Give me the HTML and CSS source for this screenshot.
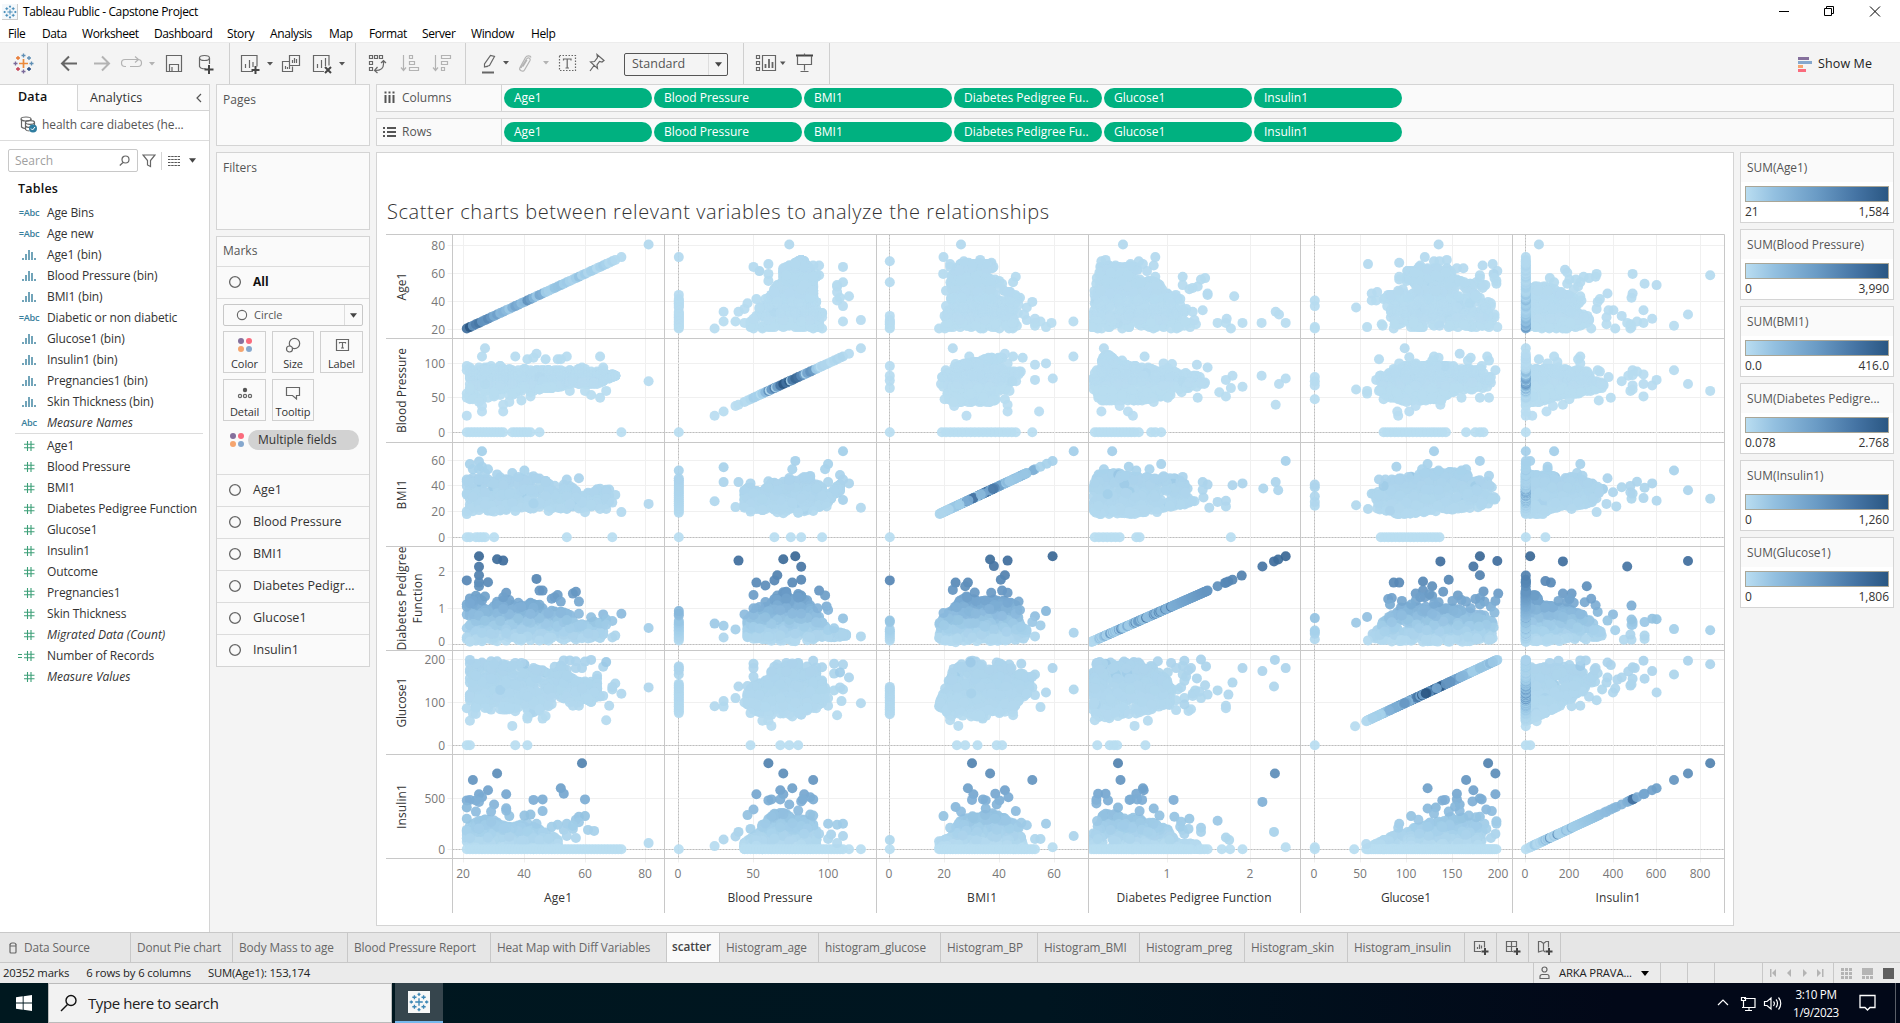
FILE: index.html
```html
<!DOCTYPE html>
<html lang="en">
<head>
<meta charset="utf-8">
<title>Tableau Public - Capstone Project</title>
<link rel="stylesheet" href="styles.css">
</head>
<body>
<svg class="defs" width="0" height="0" aria-hidden="true">
  <defs>
    <symbol id="i-hash" viewBox="0 0 12 12"><path d="M4.5 1v10M8 1v10M1 4.2h10.5M1 7.8h10.5"/></symbol>
    <symbol id="i-bin" viewBox="0 0 14 12"><path d="M1 9v2M4 5v6M7 1v10M10 3v8M13 9v2"/></symbol>
    <symbol id="i-circle" viewBox="0 0 14 14"><circle cx="7" cy="7" r="5.4"/></symbol>
    <symbol id="i-caret" viewBox="0 0 8 5"><path d="M0 0h8L4 5z"/></symbol>
    <symbol id="i-dots" viewBox="0 0 16 16"><circle cx="4" cy="4" r="3" fill="#85709c"/><circle cx="12" cy="4" r="3" fill="#fa6b7d"/><circle cx="4" cy="12" r="3" fill="#f5a56f"/><circle cx="12" cy="12" r="3" fill="#85a8ce"/></symbol>
    <symbol id="i-tableau" viewBox="0 0 24 24"><path d="M12 7.5v9M7.5 12h9M12 .8v4M10.2 2.8h3.6M12 19.2v4M10.2 21.2h3.6M.8 12h4M2.8 10.2v3.6M19.2 12h4M21.2 10.2v3.6M6.5 3.8v5M4 6.3h5M17.5 3.8v5M15 6.3h5M6.5 15.2v5M4 17.7h5M17.5 15.2v5M15 17.7h5"/></symbol>
  </defs>
</svg>

<header class="titlebar">
  <span class="app-icon"><svg width="14" height="14"><use href="#i-tableau"/></svg></span>
  <span class="app-title">Tableau Public - Capstone Project</span>
  <svg class="winctl" width="131" height="22"><path d="M10 10.5h10"/><path d="M55.500 7.500h7v7h-7zM57.500 7.500v-2h7v7h-2"/><path d="M101 5.500l10 10M111 5.500l-10 10"/></svg>
</header>
<nav class="menubar"><span>File</span><span>Data</span><span>Worksheet</span><span>Dashboard</span><span>Story</span><span>Analysis</span><span>Map</span><span>Format</span><span>Server</span><span>Window</span><span>Help</span></nav>

<div class="toolbar">
  <svg class="tb tb-logo" width="47" height="35"><g fill="none" stroke-width="1.3"><path stroke="#eb8a3c" stroke-width="1.7" d="M23.500 13v9M19 17.500h9"/><path stroke="#5f8fb5" d="M23.500 7.500v4M21.500 9.500h4M31.500 15.500v4M29.500 17.500h4M27 12h4M29 10v4"/><path stroke="#e8762d" d="M16 12h4M18 10v4"/><path stroke="#7a6a9a" d="M13.500 17.500h4M15.500 15.500v4M23.500 23.500v4M21.500 25.500h4"/><path stroke="#c43d52" d="M16 23h4M18 21v4"/><path stroke="#1f447e" d="M27 23h4M29 21v4"/></g></svg>
  <svg class="tb" width="182" height="35"><g class="ln" transform="translate(-1 0)">
    <path stroke-width="2" d="M15 17.500h15M22 10.500l-7 7 7 7"/>
    <path class="dim" stroke-width="2" d="M47 17.500h15M55 10.500l7 7-7 7"/>
    <path class="dim" d="M79 20.500h-1a3.500 3.500 0 0 1 0-7h13M88 10.500l3.500 3-3.500 3M91 13.500a3.500 3.500 0 0 1 0 7h-8"/>
    <path class="dimf" d="M102 16h6l-3 3.500z"/>
    <path d="M119.500 9.500h15v16h-15zM122.500 25v-6.500h9v6.500M125 21v4"/>
    <path d="M152.500 12v8.500c1 2 4 2.500 6 2M162.500 12v6"/><ellipse cx="157.500" cy="12" rx="5" ry="2.500"/><path class="bold" d="M162 19v9M157.500 23.500h9"/>
  </g></svg>
  <svg class="tb" width="126" height="35"><g class="ln" transform="translate(-1 0)">
    <path d="M24 25.500h-11.500v-16h15.500v11M16.500 18v4M20.500 14v8M24 16v5"/><path class="bold" d="M26.500 20v8M22.500 24h8"/>
    <path class="dkf" d="M38 16h6l-3 3.500z"/>
    <path d="M60.500 9.500h10v10h-10zM63.500 14v3M65.500 12v5M67.500 13v4M60 15.500h-6.500v10h10v-5M56.500 20v3M58.500 21v2M60.500 20v3"/>
    <path d="M95 25.500h-10.500v-16h15.500v10M88.500 18v4M92.500 14v8M96.500 12v8"/><path class="bold" d="M96 21l6 6M102 21l-6 6"/>
    <path class="dkf" d="M110 16h6l-3 3.500z"/>
  </g></svg>
  <svg class="tb" width="110" height="35"><g class="ln" transform="translate(-1 0)">
    <path d="M14.500 9.500h3v3h-3zM19.500 9.500h3v3h-3zM24.500 9.500h3v3h-3zM14.500 15.500h3v3h-3zM14.500 21.500h3v3h-3zM28.500 15v3c0 4-3 6.500-8 6.500M26 17l2.500-2.500 2.500 2.500M22.500 21l-3 3.500 3 2.500"/>
    <path class="dim" d="M48.500 9v15M46 21.500l2.500 3 2.500-3M54.500 9.500h3v3h-3zM54.500 15.500h5v3h-5zM54.500 21.500h9v3h-9z"/>
    <path class="dim" d="M80.500 9v15M78 21.500l2.500 3 2.500-3M86.500 9.500h9v3h-9zM86.500 15.500h6v3h-6zM86.500 21.500h3v3h-3z"/>
  </g></svg>
  <svg class="tb tb-last" width="158" height="35"><g class="ln">
    <path d="M18.500 21v-3l6-8.500 4 1-5 9zM18.500 21l3.500-.5"/><path stroke-width="2" d="M16 26.500h12"/>
    <path class="dkf" d="M37 15h6l-3 3.500z"/>
    <path class="dim" d="M55 22l5.500-9c1.500-2.500 4.500-.5 3.500 1.500l-5.500 9.500c-1.500 2.500-6 .5-4.500-2.500l5.500-10c1.500-2.500 5-2 5.500 0M57 20.500l4-6.500"/>
    <path class="dimf" d="M77 15h6l-3 3.500z"/>
    <path stroke-dasharray="1.500 1.500" d="M93.500 9.500h16v15h-16z"/><path d="M97.500 14.500v-1.500h7.500v1.500M101.200 13v9M99.500 22h3.500"/>
    <path d="M131 8.500l7 6-2 1.500-2.500-.5-2.500 3.500.5 3.500-7-6.500 4-.5 3-4zM128 19.500l-4 5.500"/>
  </g></svg>
  <div class="fit-select"><span>Standard</span><i></i><svg width="7" height="5"><use href="#i-caret"/></svg></div>
  <svg class="tb tb-show" width="86" height="35"><g class="ln" transform="translate(-1 0)">
    <path d="M13.500 9.500h3v3h-3zM13.500 15.500h3v3h-3zM13.500 21.500h3v3h-3zM19.500 9.500h13v15h-13z"/><path class="bars" d="M22.500 18v4M26 13v9M29.500 16v6"/>
    <path class="dkf" d="M37 15.500h5.500l-2.700 3.500z"/>
    <path class="bold" d="M53 9.500h17"/><path d="M54.500 10v8.500h14v-8.500M61.500 7.500v2M61.500 18.500v6M57.500 25.500h8"/>
  </g></svg>
  <div class="showme"><svg width="14" height="16"><path fill="#85709c" d="M0 1h11v3H0z"/><path fill="#85a8ce" d="M0 5h14v3H0z"/><path fill="#f5a56f" d="M0 9h5v3H0z"/><path fill="#fa6b7d" d="M0 13h8v3H0z"/></svg><span>Show Me</span></div>
</div>

<main class="work">
  <aside class="data-pane">
    <div class="pane-tabs"><b>Data</b><span>Analytics<svg width="6" height="10"><path d="M5 1L1 5l4 4"/></svg></span></div>
    <div class="source"><svg width="18" height="17"><g class="ln"><ellipse cx="6" cy="3" rx="5" ry="2"/><path d="M1.500 3v8c1 1 2 1.500 4 1.500M11 3v1"/><ellipse cx="10" cy="6.500" rx="4.500" ry="1.800"/><path d="M5.500 6.500v7c1 1.500 3 1.500 4 1.500M14.500 6.500v3M5.500 10c1.500 1.500 4 1.500 5 1"/></g><circle cx="13" cy="12.500" r="4" fill="#2f7da0"/><path d="M11 12.500l1.500 1.500 2.500-3" fill="none" stroke="#fff"/></svg><span>health care diabetes (he...</span></div>
    <div class="search-row">
      <div class="search"><span>Search</span><svg width="11" height="11"><g class="ln"><circle cx="6.500" cy="4.500" r="3.500"/><path d="M4 7.500L.8 10.500"/></g></svg></div>
      <svg width="14" height="14"><path class="lnp" d="M1 1h12l-4.500 5.500v6l-3-1.500V6.500z"/></svg>
      <i></i>
      <svg class="view-ic" width="12" height="12"><path d="M0 1.500h12M0 4.500h12M0 7.500h12M0 10.500h12" stroke="#555" stroke-dasharray="2.500 .7" fill="none"/></svg>
      <svg class="view-caret" width="7" height="5"><use href="#i-caret"/></svg>
    </div>
    <h2>Tables</h2>
    <ul class="fields dims">
      <li><em class="abc">=Abc</em>Age Bins</li>
      <li><em class="abc">=Abc</em>Age new</li>
      <li><em><svg width="14" height="12"><use href="#i-bin"/></svg></em>Age1 (bin)</li>
      <li><em><svg width="14" height="12"><use href="#i-bin"/></svg></em>Blood Pressure (bin)</li>
      <li><em><svg width="14" height="12"><use href="#i-bin"/></svg></em>BMI1 (bin)</li>
      <li><em class="abc">=Abc</em>Diabetic or non diabetic</li>
      <li><em><svg width="14" height="12"><use href="#i-bin"/></svg></em>Glucose1 (bin)</li>
      <li><em><svg width="14" height="12"><use href="#i-bin"/></svg></em>Insulin1 (bin)</li>
      <li><em><svg width="14" height="12"><use href="#i-bin"/></svg></em>Pregnancies1 (bin)</li>
      <li><em><svg width="14" height="12"><use href="#i-bin"/></svg></em>Skin Thickness (bin)</li>
      <li class="it"><em class="abc">Abc</em>Measure Names</li>
    </ul>
    <ul class="fields meas">
      <li><em><svg width="12" height="12"><use href="#i-hash"/></svg></em>Age1</li>
      <li><em><svg width="12" height="12"><use href="#i-hash"/></svg></em>Blood Pressure</li>
      <li><em><svg width="12" height="12"><use href="#i-hash"/></svg></em>BMI1</li>
      <li><em><svg width="12" height="12"><use href="#i-hash"/></svg></em>Diabetes Pedigree Function</li>
      <li><em><svg width="12" height="12"><use href="#i-hash"/></svg></em>Glucose1</li>
      <li><em><svg width="12" height="12"><use href="#i-hash"/></svg></em>Insulin1</li>
      <li><em><svg width="12" height="12"><use href="#i-hash"/></svg></em>Outcome</li>
      <li><em><svg width="12" height="12"><use href="#i-hash"/></svg></em>Pregnancies1</li>
      <li><em><svg width="12" height="12"><use href="#i-hash"/></svg></em>Skin Thickness</li>
      <li class="it"><em><svg width="12" height="12"><use href="#i-hash"/></svg></em>Migrated Data (Count)</li>
      <li><em><svg class="eq" width="17" height="12"><path d="M0 4.500h4M0 7.500h4"/><use href="#i-hash" x="5" width="12" height="12"/></svg></em>Number of Records</li>
      <li class="it"><em><svg width="12" height="12"><use href="#i-hash"/></svg></em>Measure Values</li>
    </ul>
  </aside>

  <section class="cards">
    <div class="card pages">Pages</div>
    <div class="card filters">Filters</div>
    <div class="card marks">
      <div class="mk-head">Marks</div>
      <div class="mk-row mk-all"><svg width="14" height="14"><use href="#i-circle"/></svg><b>All</b></div>
      <div class="mk-body">
        <div class="mk-select"><svg width="12" height="12"><use href="#i-circle"/></svg><span>Circle</span><i><svg width="7" height="5"><use href="#i-caret"/></svg></i></div>
        <div class="mk-btns">
          <div><svg width="16" height="16"><use href="#i-dots"/></svg>Color</div>
          <div><svg width="16" height="16"><g class="ln"><circle cx="9.500" cy="6.500" r="5.200"/><circle cx="4.500" cy="12" r="3" fill="#fafafa"/></g></svg>Size</div>
          <div><svg width="16" height="16"><g class="ln"><path d="M2.500 2.500h12v11h-12z"/><path d="M5.500 6.500v-1h6v1M8.500 5.500v5.500M7 11h3"/></g></svg>Label</div>
          <div><svg width="16" height="16"><circle cx="8" cy="5" r="2.200" fill="#555"/><g class="ln"><circle cx="3" cy="11" r="1.600"/><circle cx="8" cy="11" r="1.600"/><circle cx="13" cy="11" r="1.600"/></g></svg>Detail</div>
          <div><svg width="16" height="16"><path class="lnp" d="M1.500 2.500h13v8h-3v3.500l-4-3.500h-6z"/></svg>Tooltip</div>
        </div>
        <div class="mk-multi"><svg width="16" height="16"><use href="#i-dots"/></svg><span>Multiple fields</span></div>
      </div>
      <div class="mk-row"><svg width="14" height="14"><use href="#i-circle"/></svg><span>Age1</span></div>
      <div class="mk-row"><svg width="14" height="14"><use href="#i-circle"/></svg><span>Blood Pressure</span></div>
      <div class="mk-row"><svg width="14" height="14"><use href="#i-circle"/></svg><span>BMI1</span></div>
      <div class="mk-row"><svg width="14" height="14"><use href="#i-circle"/></svg><span>Diabetes Pedigr...</span></div>
      <div class="mk-row"><svg width="14" height="14"><use href="#i-circle"/></svg><span>Glucose1</span></div>
      <div class="mk-row"><svg width="14" height="14"><use href="#i-circle"/></svg><span>Insulin1</span></div>
    </div>
  </section>

  <section class="canvas">
    <div class="shelf"><div class="shelf-name"><svg width="14" height="14"><path d="M2.500 4v8M6.500 4v8M10.500 4v8M1.500 1.500h2M5.500 1.500h2M9.500 1.500h2" stroke="#555" stroke-width="2"/></svg>Columns</div><div class="pills"><span>Age1</span><span>Blood Pressure</span><span>BMI1</span><span>Diabetes Pedigree Fu..</span><span>Glucose1</span><span>Insulin1</span></div></div>
    <div class="shelf"><div class="shelf-name"><svg width="14" height="14"><path d="M0 3h2M4 3h9M0 7h2M4 7h9M0 11h2M4 11h9" stroke="#555" stroke-width="2"/></svg>Rows</div><div class="pills"><span>Age1</span><span>Blood Pressure</span><span>BMI1</span><span>Diabetes Pedigree Fu..</span><span>Glucose1</span><span>Insulin1</span></div></div>
    <div class="stage">
      <div class="view"><svg id="chart" width="1356" height="772"></svg></div>
      <div class="legends">
        <div class="legend"><h3>SUM(Age1)</h3><div class="ramp"></div><p><span>21</span><span>1,584</span></p></div>
        <div class="legend"><h3>SUM(Blood Pressure)</h3><div class="ramp"></div><p><span>0</span><span>3,990</span></p></div>
        <div class="legend"><h3>SUM(BMI1)</h3><div class="ramp"></div><p><span>0.0</span><span>416.0</span></p></div>
        <div class="legend"><h3>SUM(Diabetes Pedigre...</h3><div class="ramp"></div><p><span>0.078</span><span>2.768</span></p></div>
        <div class="legend"><h3>SUM(Insulin1)</h3><div class="ramp"></div><p><span>0</span><span>1,260</span></p></div>
        <div class="legend"><h3>SUM(Glucose1)</h3><div class="ramp"></div><p><span>0</span><span>1,806</span></p></div>
      </div>
    </div>
  </section>
</main>

<nav class="sheets">
  <span class="src"><svg width="9" height="12"><g class="ln"><path d="M1 2.500v7.500a1 1 0 0 0 1 1h4a1 1 0 0 0 1-1v-7.500M1 4h6"/><path d="M1 3a2 2 0 0 1 2-2h2a2 2 0 0 1 2 2"/></g></svg>Data Source</span>
  <span>Donut Pie chart</span><span>Body Mass to age</span><span>Blood Pressure Report</span><span>Heat Map with Diff Variables</span><span class="on">scatter</span><span>Histogram_age</span><span>histogram_glucose</span><span>Histogram_BP</span><span>Histogram_BMI</span><span>Histogram_preg</span><span>Histogram_skin</span><span>Histogram_insulin</span>
  <span class="new"><svg width="16" height="16"><g class="ln"><path d="M8 11.500H1.500v-10h10v6M4.500 7v2M6.500 4.500v4.500M8.500 5.500v3"/><path class="bold" d="M12 8v7M8.500 11.500h7"/></g></svg></span>
  <span class="new"><svg width="16" height="16"><g class="ln"><path d="M8 11.500H1.500v-10h10v6M1.500 6.500h10M6.500 1.500v10"/><path class="bold" d="M12 8v7M8.500 11.500h7"/></g></svg></span>
  <span class="new"><svg width="16" height="16"><g class="ln"><path d="M8 12l-1.500-1.500L1.500 12V1.500l2.500 0 2.500 2 2.500-2h2.500v6M6.500 3.500v7"/><path class="bold" d="M12 8v7M8.500 11.500h7"/></g></svg></span>
  <span class="rest"></span>
</nav>
<div class="status">
  <span class="st-text"><span>20352 marks</span><span>6 rows by 6 columns</span><span>SUM(Age1): 153,174</span></span>
  <span class="user"><svg width="11" height="14"><g class="ln"><circle cx="5.500" cy="3.500" r="2.500"/><path d="M1 12.500v-2a2 2 0 0 1 2-2h5a2 2 0 0 1 2 2v2z"/></g></svg><span>ARKA PRAVA...</span><svg class="ucaret" width="8" height="5"><use href="#i-caret"/></svg></span>
  <span></span><span></span><span></span>
  <span><svg width="66" height="20"><g fill="#b4b4b4" transform="translate(-1 0)"><path d="M8 6h1.500v8H8zM14 6v8l-4-4zM29 6v8l-4-4zM41 6v8l4-4zM55 6v8l4-4zM60 6h1.500v8H60z"/></g></svg></span>
  <span><svg width="66" height="20"><g transform="translate(-1 0)"><path stroke="#b4b4b4" stroke-width="3" stroke-dasharray="3 1" d="M8 6.500h11M8 10.500h11M8 14.500h11"/><path fill="#b4b4b4" d="M29 5h11v7H29zM29 13h3v3h-3zM33 13h3v3h-3zM37 13h3v3h-3z"/><path fill="#5f5f5f" d="M50 5h11v11H50z"/></g></svg></span>
</div>
<footer class="taskbar">
  <div class="start"><svg width="17" height="16"><path fill="#fff" d="M0 2.300L6.700 1.300v6.200H0zM7.600 1.200L16 0v7.500H7.600zM0 8.500h6.700v6.200L0 13.700zM7.600 8.500H16V16l-8.400-1.200z"/></svg></div>
  <div class="tsearch"><svg width="18" height="18"><g fill="none" stroke="#111" stroke-width="1.400"><circle cx="11" cy="6.500" r="5"/><path d="M7.500 10.500L1 17"/></g></svg><span>Type here to search</span></div>
  <div class="tapp"><i><svg width="20" height="20"><use href="#i-tableau"/></svg></i></div>
  <div class="tray">
    <svg width="70" height="22"><g fill="none" stroke="#fff" stroke-width="1.200"><path d="M2 13l5-5 5 5"/><path d="M28 6.500h11v9H26M25.500 5.500h4v3h-4zM27.500 9v7M33 15.500v3M29 18.500h7"/><path d="M48.500 9.500h2.500l4-3.500v11l-4-3.500h-2.500zM57.500 9.500c1 1 1 3 0 4.500M60 7.500c2 2 2 5.500 0 8M62.500 5.500c3 3.500 3 8.500 0 12"/></g></svg>
    <div class="clock"><span>3:10 PM</span><span>1/9/2023</span></div>
    <svg class="note" width="18" height="18"><path fill="none" stroke="#fff" stroke-width="1.300" d="M1 1.500h15v12h-5l-2.500 2.500-2.500-2.500H1z"/></svg>
    <i class="peek"></i>
  </div>
</footer>
<script src="chart.js"></script>
</body>
</html>
```
FILE: styles.css
```css
* { box-sizing: border-box; }
body { margin: 0; width: 1900px; height: 1023px; overflow: hidden; display: flex; flex-direction: column; background: #f4f4f4; font-family: "Open Sans", "Noto Sans", sans-serif; font-size: 12px; color: #333; line-height: 16px; }
svg { display: block; flex: none; }
.defs { position: absolute; }
ul, h2, h3, p { margin: 0; padding: 0; list-style: none; }
em { font-style: normal; }
.ln, .lnp { fill: none; stroke: #666; stroke-width: 1.2; }
.ln .bold { stroke: #444; stroke-width: 2; }
.ln .bars { stroke-width: 1.8; }
.ln .dim { stroke: #b3b3b3; }
.ln .dimf { fill: #b3b3b3; stroke: none; }
.ln .dkf { fill: #555; stroke: none; }
use[href="#i-circle"] { fill: none; stroke: #666; stroke-width: 1.3; }
use[href="#i-caret"] { fill: #444; }

.titlebar { height: 23px; background: #fff; display: flex; align-items: center; color: #000; font-size: 12px; letter-spacing: -.35px; }
.app-icon { width: 16px; height: 16px; margin: 0 5px 0 2px; padding: 1px; border: 1px solid #ccc; border-width: 0 1px 1px 0; background: #f4f8fb; }
.app-icon use { fill: none; stroke: #3d87b5; stroke-width: 1.6; }
.winctl { margin-left: auto; fill: none; stroke: #000; }
.menubar { height: 20px; background: #fff; color: #000; display: grid; grid-template-columns: 34px 40px 72px 73px 43px 59px 40px 53px 49px 60px 60px; padding-left: 8px; line-height: 21px; letter-spacing: -.4px; border-bottom: 1px solid #ececec; }

.toolbar { height: 41px; display: flex; align-items: center; padding-top: 1px; }
.tb { height: 42px; padding-top: 3px; border-right: 1px solid #cfcfcf; overflow: visible; }
.tb-last { border: 0; }
.tb-logo { width: 48px; }
.fit-select { width: 104px; height: 23px; border: 1px solid #555; border-radius: 2px; display: flex; align-items: center; padding: 0 5px 0 7px; color: #555; font-size: 12.500px; }
.fit-select span { flex: 1; }
.fit-select i { width: 1px; height: 21px; background: #ddd; margin-right: 6px; }
.tb-show { margin-left: 15px; width: 87px; border-left: 1px solid #cfcfcf; }
.showme { margin-left: auto; margin-right: 28px; display: flex; gap: 6px; align-items: center; font-size: 12.500px; letter-spacing: .1px; color: #222; }

.work { display: flex; height: 848px; }
.data-pane { width: 210px; background: #fff; border-right: 1px solid #d4d4d4; border-top: 1px solid #d4d4d4; }
.pane-tabs { display: flex; height: 26px; line-height: 24px; font-size: 12.500px; }
.pane-tabs b { width: 77px; padding-left: 18px; color: #111; font-weight: 600; letter-spacing: .2px; }
.pane-tabs span { flex: 1; display: flex; justify-content: space-between; align-items: center; padding: 0 7px 0 12px; background: #fafafa; border: 1px solid #d4d4d4; border-width: 0 0 1px 1px; letter-spacing: .1px; }
.pane-tabs svg { fill: none; stroke: #555; stroke-width: 1.2; }
.source { height: 30px; border-bottom: 1px solid #dcdcdc; display: flex; align-items: center; gap: 4px; padding: 0 0 2px 20px; color: #555; letter-spacing: -.08px; }
.search-row { display: flex; align-items: center; height: 23px; margin: 8px 0 0 8px; }
.search { width: 130px; height: 23px; border: 1px solid #c8c8c8; border-radius: 2px; display: flex; justify-content: space-between; align-items: center; padding: 0 7px 0 6px; color: #a0a0a0; margin-right: 4px; }
.search-row i { width: 1px; height: 18px; background: #d4d4d4; margin: 0 6px 0 5px; }
.view-caret { margin-left: 9px; }
h2 { font-size: 12.500px; font-weight: 600; color: #111; padding: 9px 0 5px 18px; letter-spacing: .2px; }
.fields { font-size: 12px; letter-spacing: -.12px; }
.fields li { height: 21px; line-height: 21px; display: flex; align-items: center; white-space: nowrap; }
.fields em { width: 29px; margin-left: 18px; height: 21px; display: flex; align-items: center; justify-content: center; padding-right: 7px; }
.fields .abc { color: #377e9c; font-weight: 600; font-size: 9.200px; letter-spacing: -.3px; font-style: normal; }
.fields .it { font-style: italic; letter-spacing: .02px; }
use[href="#i-bin"] { fill: none; stroke: #377e9c; stroke-width: 1.4; }
use[href="#i-hash"], .eq path { fill: none; stroke: #3c9f77; stroke-width: 1.1; }
.fields .eq { margin-left: -5px; }
.meas { border-top: 1px solid #dcdcdc; margin: 0 6px 0 15px; }
.meas li { margin-left: -15px; }
.meas li:first-child { margin-top: 1px; }

.cards { width: 166px; padding-left: 6px; display: flex; flex-direction: column; gap: 6px; }
.card { width: 154px; border: 1px solid #d4d4d4; background: #fafafa; color: #555; padding: 7px 6px; }
.pages { height: 62px; }
.filters { height: 78px; }
.marks { padding: 0; height: 431px; }
.mk-head { height: 29px; padding: 6px 6px; }
.mk-row { height: 32px; border-top: 1px solid #dcdcdc; display: flex; align-items: center; padding: 0 0 1px 11px; gap: 11px; color: #333; font-size: 12.500px; }
.mk-row b { color: #111; font-weight: 700; font-size: 12px; }
.mk-all { padding-bottom: 2px; }
.mk-body { height: 176px; border-top: 1px solid #dcdcdc; padding: 5px 6px; }
.mk-select { height: 22px; border: 1px solid #c8c8c8; border-radius: 2px; display: flex; align-items: center; padding-left: 12px; gap: 6px; font-size: 11px; }
.mk-select i { margin-left: auto; width: 18px; height: 20px; border-left: 1px solid #ddd; display: flex; align-items: center; justify-content: center; }
.mk-btns { display: grid; grid-template-columns: 43px 42px 43px; grid-auto-rows: 42px; gap: 6px; margin-top: 5px; }
.mk-btns div { border: 1px solid #d0d0d0; display: flex; flex-direction: column; align-items: center; justify-content: space-between; padding: 5px 0 0; font-size: 11px; color: #333; letter-spacing: -.1px; }
.mk-multi { display: flex; align-items: center; gap: 3px; padding-left: 6px; margin-top: 9px; color: #333; }
.mk-multi svg { height: 16px; }
.mk-multi span { width: 111px; height: 20px; line-height: 19px; border-radius: 10px; background: #d2d2d2; padding-left: 10px; font-size: 12px; font-weight: 500; }

.canvas { width: 1518px; display: flex; flex-direction: column; gap: 6px; }
.shelf { height: 28px; border: 1px solid #d4d4d4; background: #fafafa; display: flex; align-items: center; }
.shelf-name { width: 125px; height: 26px; border-right: 1px solid #d4d4d4; display: flex; align-items: center; gap: 5px; padding-left: 6px; color: #555; }
.pills { display: flex; gap: 2px; padding-left: 2px; }
.pills span { width: 148px; height: 20px; line-height: 19px; border-radius: 10px; background: #00b180; color: #fff; padding-left: 10px; font-size: 12px; letter-spacing: 0; white-space: nowrap; }
.stage { display: flex; justify-content: space-between; }
.view { width: 1358px; height: 774px; border: 1px solid #d4d4d4; background: #fff; }
.legends { display: flex; flex-direction: column; gap: 6px; }
.legend { width: 154px; height: 71px; border: 1px solid #d4d4d4; background: #fff; padding: 0 4px; }
.legend h3 { font-size: 11.900px; font-weight: 400; color: #555; background: #fafafa; height: 29px; line-height: 29px; margin: 0 -4px; padding-left: 6px; white-space: nowrap; }
.ramp { height: 16px; margin-top: 4px; border: 1px solid #a9a697; background: linear-gradient(90deg, #b9ddf1, #93c0e0 20%, #6a9bc5 50%, #4473a3 78%, #2a5783); }
.legend p { display: flex; justify-content: space-between; line-height: 19px; }

#chart text { font-family: "Open Sans", "Noto Sans", sans-serif; font-size: 12px; fill: #787878; }
#chart .cap { font-weight: 300; font-size: 20px; fill: #333; }
#chart .ax { font-size: 12px; fill: #333; }
#chart .grid { stroke: #f0f0f0; }
#chart .zero { stroke: #bdbdbd; stroke-dasharray: 2 1; }
#chart .frame { stroke: #c8c8c8; }

.sheets { height: 30px; display: grid; grid-template-columns: 131px 102px 115px 143px 176px 53px 99px 122px 97px 102px 105px 103px 117px 32px 32px 32px 1fr; background: #e6e6e6; border-top: 1px solid #c8c8c8; color: #666; line-height: 29px; font-size: 11.800px; letter-spacing: -.1px; }
.sheets span { border-right: 1px solid #c8c8c8; padding-left: 6px; white-space: nowrap; overflow: hidden; }
.sheets .src { display: flex; align-items: center; gap: 6px; padding-left: 9px; }
.sheets .on { background: #fafafa; color: #444; font-weight: 600; padding-left: 5px; line-height: 26px; }
.sheets .new { display: flex; align-items: center; padding-left: 8px; }
.sheets .rest { border: 0; }
.status { height: 21px; display: grid; grid-template-columns: 1533px 127px 27px 27px 48px 71px 1fr; background: #ebebeb; border-top: 1px solid #c8c8c8; line-height: 20px; font-size: 11.300px; color: #222; letter-spacing: -.15px; }
.status > span { border-left: 1px solid #c8c8c8; }
.status .st-text { border: 0; display: flex; gap: 17px; padding-left: 3px; }
.status .user { display: flex; align-items: center; padding-left: 5px; gap: 9px; }
.ucaret use { fill: #000; }

.taskbar { height: 40px; background: linear-gradient(90deg, #00181f, #001520 55%, #020818 85%); display: flex; color: #fff; }
.start { width: 48px; display: flex; align-items: center; justify-content: center; }
.tsearch { width: 344px; background: #f2f2f2; border: 1px solid #bbb; display: flex; align-items: center; gap: 10px; padding-left: 11px; color: #222; font-size: 15px; letter-spacing: -.4px; }
.tapp { width: 48px; margin-left: 3px; background: #36454d; border-bottom: 2px solid #76b9ed; display: flex; align-items: center; justify-content: center; }
.tapp i { width: 22px; height: 22px; padding: 1px; background: #f7f7f7; }
.tapp use { fill: none; stroke: #3d87b5; stroke-width: 1.6; }
.tray { margin-left: auto; display: flex; align-items: center; }
.clock { width: 60px; margin-left: 0; display: flex; flex-direction: column; align-items: center; font-size: 11.700px; line-height: 18px; letter-spacing: -.35px; }
.note { margin: 0 18px 0 13px; }
.peek { width: 1px; height: 40px; background: #5a5f68; margin-right: 4px; }
```
FILE: chart.js
```js
// Scatter matrix: six measures against each other.
const W = 212, H = 104, LEFT = 75.5, TOP = 81.5;
// x: [offset, scale], y: [offset, scale] within a panel; max = top of the colour range
const V = {
  age: { t: 'Age1', x: [-49.3, 3.03], y: [123.4, 1.4], xt: [20, 40, 60, 80], yt: [20, 40, 60, 80], max: 1584, step: 1 },
  bp: { t: 'Blood Pressure', x: [14.3, 1.493], y: [93.7, .6885], xt: [0, 50, 100], yt: [0, 50, 100], max: 3990, step: 2 },
  bmi: { t: 'BMI1', x: [13.3, 2.74], y: [94.7, 1.282], xt: [0, 20, 40, 60], yt: [0, 20, 40, 60], max: 416, step: .1 },
  dpf: { t: 'Diabetes Pedigree Function', x: [-3.7, 83], y: [98.3, 36.6], xt: [1, 2], yt: [0, 1, 2], max: 2.768, step: .001 },
  glu: { t: 'Glucose1', x: [14.3, .917], y: [94.7, .4285], xt: [0, 50, 100, 150, 200], yt: [0, 100, 200], max: 1806, step: 1 },
  ins: { t: 'Insulin1', x: [13.3, .218], y: [94.7, .1017], xt: [0, 200, 400, 600, 800], yt: [0, 500], max: 1260, step: 1 }
};
const K = Object.keys(V);
const range = (a, b, s) => { const r = []; for (let v = a; v <= b + 1e-9; v += s) r.push(v); return r; };

// band: [x, low y, high y]; pts: single marks; y0 / x0: marks lying on a zero line
const D = {
  'age-bp': { band: [[21,50,96],[22,46,100],[24,46,92],[27,46,96],[28,50,96],[34,54,98],[37,52,92],[40,52,92],[42,56,90],[46,62,92],[50,64,92],[54,68,90],[56,70,92],[60,68,96],[63,68,90],[66,74,86],[70,81,84]],
    pts: [[27,122],[26,110],[37,110],[44,114],[54,110],[65,110],[81,74],[21,24],[26,30],[33,30],[35,44],[33,40],[25,44],[47,106],[41,106],[43,108],[51,106],[52,106],[62,54],[65,50],[67,60],[60,60],[55,60],[42,52],[39,46],[66,94],[66,90],[26,38]],
    y0: [...range(21,33,1),36,37,38,39,40,41,42,45,72] },
  'age-bmi': { band: [[21,19,45],[24,20,47],[28,20,46],[32,20,47],[36,22,45],[40,22,46],[44,22,48],[47,22,46],[50,21,40],[54,22,42],[58,22,36],[62,24,36],[64,24,39],[68,26,37]],
    pts: [[21,18],[22,57],[25,59],[26,67],[23,53],[25,53],[26,55],[27,50],[28,53],[31,49],[36,50],[38,47],[40,52],[58,46],[54,45],[72,19.6],[81,26],[70,33],[60,19.5],[65,22],[67,22],[69,27],[30,20],[37,20.5],[48,20.5]],
    y0: [21,22,24,25,26,27,30,54,69] },
  'age-dpf': { band: [[21,.1,1.1],[22,.08,1.3],[25,.08,1.4],[27,.1,1.2],[28,.1,1],[31,.08,1.2],[34,.1,1.25],[37,.1,1.15],[42,.1,1.2],[45,.1,1.1],[47,.1,.9],[50,.14,.95],[53,.12,.9],[56,.14,.8],[60,.12,.55],[62,.15,.65],[66,.2,.6]],
    pts: [[25,2.42],[25,2.13],[25,1.9],[25,1.7],[25,1.6],[21,1.76],[28,1.71],[31,2.34],[33,2.3],[44,1.8],[34,1.42],[45,1.48],[46,1.48],[49,1.26],[50,1.3],[51,1.36],[56,1.4],[57,1.45],[52,1.18],[58,1.18],[66,.83],[67,.7],[69,.65],[72,.85],[81,.46],[69,.2],[70,.25],[58,.85],[27,1.32],[33,1.3],[67,.55],[62,.75]] },
  'age-glu': { band: [[21,74,178],[22,64,192],[24,70,192],[28,76,196],[31,85,197],[34,80,190],[40,74,195],[42,72,192],[45,80,185],[48,90,165],[50,95,188],[53,100,188],[55,98,160],[58,98,148],[62,100,150],[65,104,165]],
    pts: [[22,57],[22,199],[36,45],[41,62],[41,67],[47,68],[46,62],[67,58],[68,92],[72,120],[81,135],[69,130],[70,144],[69,136],[66,183],[67,194],[62,199],[60,195],[59,180],[53,198],[55,198],[57,196],[58,92],[56,92],[57,180],[66,115]],
    y0: [21,22,37,41] },
  'age-ins': { band: [[21,0,230],[26,0,300],[29,0,320],[32,0,250],[36,0,210],[40,0,270],[44,0,210],[48,0,150],[51,0,110]],
    pts: [[59,846],[31,744],[23,680],[28,580],[25,540],[26,510],[34,540],[21,480],[22,485],[24,480],[25,465],[43,485],[46,490],[60,490],[52,600],[53,545],[30,440],[34,402],[35,325],[46,375],[40,330],[42,340],[58,320],[60,325],[57,290],[58,265],[54,250],[51,240],[49,220],[61,190],[63,180],[53,190],[56,200],[54,130],[57,110],[81,60],[21,410],[21,300],[24,370],[56,230],[44,250],[29,370],[34,380]],
    y0: range(21,72,1) },
  'bp-bmi': { band: [[43,25,35],[46,22,40],[50,20,37],[55,20,36],[60,21,44],[65,19,44],[70,18,44],[75,19,47],[80,19,45],[85,20,49],[90,20,51],[94,23,42],[98,25,34],[104,33,36],[108,36,42]],
    pts: [[110,67],[78,59.5],[76,53],[30,54.5],[30,43],[40,43],[38,23.5],[24,28],[48,42],[100,57],[98,53],[100,43],[108,48.5],[114,42],[110,29],[122,23],[44,23],[48,20],[110,45],[99,24],[0,52]],
    y0: [64,75,82,96,0], x0: range(19,46,1.5) },
  'bp-dpf': { band: [[45,.2,.6],[50,.14,.95],[55,.1,1.2],[60,.1,1.15],[65,.1,1.35],[70,.1,1.48],[75,.1,1.4],[80,.08,1.4],[85,.1,1.25],[90,.1,1],[94,.2,.75],[100,.2,.4],[106,.2,.35],[112,.25,.3]],
    pts: [[40,2.3],[70,2.34],[78,2.42],[82,2.13],[82,1.78],[76,1.7],[66,1.9],[64,1.76],[58,1.62],[52,1.7],[50,1.36],[50,1],[44,.83],[94,1.48],[98,1.35],[99,1.05],[100,.95],[110,.72],[104,.45],[122,.23],[38,.42],[30,.52],[30,.2],[24,.58],[93,1]],
    x0: [...range(.12,.6,.04),.65,.8,.85,.92] },
  'bp-glu': { band: [[46,95,120],[50,78,140],[55,76,148],[60,68,165],[65,72,192],[70,70,198],[75,65,199],[80,64,195],[85,78,182],[90,82,190],[94,92,178],[98,108,128]],
    pts: [[40,137],[46,138],[50,160],[38,110],[24,91],[30,90],[30,103],[44,100],[48,75],[56,57],[60,57],[62,45],[50,190],[50,180],[104,190],[110,188],[104,167],[108,170],[114,158],[110,130],[108,135],[104,128],[109,103],[106,70],[122,98],[100,92],[96,182],[90,197],[100,110]],
    y0: [48,68,74,80], x0: [...range(75,145,4),165,175,180,184] },
  'bp-ins': { band: [[44,0,60],[50,0,130],[56,0,230],[60,0,300],[65,0,400],[70,0,380],[75,0,320],[80,0,290],[85,0,300],[90,0,270],[93,0,100]],
    pts: [[60,846],[70,744],[90,680],[52,540],[68,580],[76,600],[70,540],[60,480],[62,490],[68,490],[84,540],[88,510],[90,490],[82,470],[83,490],[74,440],[50,390],[46,335],[80,380],[100,250],[106,240],[110,250],[110,130],[102,145],[40,170],[38,125],[30,95],[24,30],[106,60],[48,200],[100,100],[88,340],[90,330],[94,150]],
    y0: [0,...range(44,110,2),114,122] },
  'bmi-dpf': { band: [[18,.16,.62],[20,.1,.75],[24,.06,1.15],[28,.06,1.35],[32,.08,1.3],[37,.08,1.25],[42,.1,1.25],[46,.1,1.15],[48,.14,.5],[50,.2,.4]],
    pts: [[59.4,2.42],[36.6,2.33],[43,2.3],[38,2.15],[42,1.9],[40.5,1.78],[24,1.7],[28.5,1.7],[27.5,1.6],[23,1.5],[41,1.48],[43,1.42],[31,1.43],[37,1.42],[57,.92],[53,.78],[52,.62],[55,.53],[53,.23],[67.1,.33],[47,1.18],[47.5,.95],[19.6,.87],[0,1.76]],
    x0: [...range(.12,.42,.05),.62,.66] },
  'bmi-glu': { band: [[18,90,100],[20,78,130],[22,68,158],[24,68,190],[30,66,198],[34,62,197],[38,72,197],[43,78,198],[46,76,175],[48,105,168],[51,125,160]],
    pts: [[25,45],[22,58],[59.4,180],[67.1,130],[57,123],[55,89],[53,165],[52,160],[52,135],[53,117],[48,190],[45,70],[50,120]],
    y0: [24.5,27.5,32,39,41], x0: range(72,138,4) },
  'bmi-ins': { band: [[18,0,80],[22,0,110],[25,0,260],[28,0,320],[32,0,330],[36,0,390],[40,0,330],[44,0,280],[47,0,220],[49,0,10]],
    pts: [[30,846],[36.6,744],[52,680],[28.5,600],[42,580],[30.5,540],[38.5,545],[43.3,510],[30,485],[34,490],[35,480],[40,480],[39,440],[24,415],[26,370],[46,375],[35,400],[19.6,325],[50,235],[57,250],[53,100],[55,100],[67.1,130],[59.4,20],[0,90],[22,210],[48,260]],
    y0: [0,...range(18,53,1)] },
  'dpf-glu': { band: [[.08,82,160],[.15,66,195],[.3,62,196],[.5,68,196],[.7,78,194],[.8,82,185],[.95,90,160],[1.05,95,140]],
    pts: [[2.29,199],[2.42,180],[2.14,173],[1.9,180],[2.28,137],[1.78,146],[1.6,128],[1.73,118],[1.7,92],[1.7,86],[1.4,200],[1.46,184],[1.35,156],[1.45,140],[1.48,118],[1.4,110],[1.3,120],[1.33,128],[1.2,197],[1.18,185],[1.04,192],[.88,196],[1.28,180],[1.22,160],[1.2,150],[1.25,80],[1.28,84],[1.1,82],[1.2,110],[1.1,180],[1,170],[1.16,135],[.76,57],[.6,45],[.12,58],[1.12,130],[1.3,115],[1.18,165],[1.25,175],[1.1,105],[1.2,95],[1.38,125]],
    y0: [.15,.3,.35,.39,.73] },
  'dpf-ins': { band: [[.08,0,120],[.15,0,300],[.3,0,380],[.4,0,330],[.5,0,320],[.65,0,300],[.75,0,270],[.9,0,250],[1,0,200],[1.1,0,70],[1.35,0,50]],
    pts: [[.4,846],[.43,680],[.7,600],[.71,580],[.62,545],[2.29,744],[2.14,465],[1.07,485],[.16,545],[.25,545],[.14,485],[.14,450],[.28,480],[.54,485],[.55,490],[.63,490],[.69,485],[.4,410],[.83,400],[.9,330],[.66,375],[1.08,320],[1.16,270],[1.26,300],[1.6,280],[1.4,210],[1.4,170],[1.18,190],[1.2,150],[2.28,170],[2.42,20],[1.7,115],[1.74,90],[1.15,220],[1.25,200]],
    y0: [...range(.08,1.3,.03),1.38,1.4,1.44,1.48,1.65,1.75,1.9] },
  'glu-ins': { band: [[58,0,10],[68,0,60],[80,0,110],[90,0,150],[105,0,210],[115,0,220],[130,0,280],[145,0,330],[160,0,320],[175,0,240],[183,0,180]],
    pts: [[189,846],[197,744],[165,680],[123,600],[173,580],[155,545],[197,540],[155,490],[139,480],[142,485],[172,470],[180,500],[182,490],[158,440],[123,400],[132,410],[146,370],[187,390],[193,375],[158,375],[105,325],[113,290],[168,330],[180,320],[176,315],[198,275],[185,250],[198,250],[187,200],[197,150],[192,110],[92,250],[91,210],[0,20],[56,50],[130,350],[153,420]],
    y0: [0,43,...range(56,199,2)] }
};

const AGE = [63,72,38,46,48,33,32,35,29,21,24,16,17,14,10,16,19,16,12,13,22,18,13,8,15,13,6,5,5,8,8,8,5,6,4,3,5,7,3,5,2,4,4,1,3,4,3,1,2,1,0,1];
const BP = {0:35,24:1,30:2,38:1,40:1,44:4,46:2,48:5,50:13,52:11,54:11,55:2,56:12,58:21,60:37,61:1,62:34,64:43,65:7,66:30,68:45,70:57,72:44,74:52,75:8,76:39,78:45,80:40,82:30,84:23,85:6,86:21,88:25,90:22,92:8,94:6,95:1,96:4,98:3,100:3,102:1,104:2,106:3,108:2,110:3,114:1,122:1};

let seed = 20352;
const rnd = () => { seed = (seed * 1664525 + 1013904223) % 4294967296; return seed / 4294967296; };
const bell = (v, m, s) => Math.exp(-((v - m) ** 2) / (2 * s * s));

// value -> number of records sharing it
const COUNT = {
  age: AGE.map((c, i) => [21 + i, c]).filter(p => p[1]).concat([[81, 1]]),
  bp: Object.entries(BP).map(p => [+p[0], p[1]]),
  bmi: [[0, 11], ...range(18.2, 50, .3).map(v => [v, 1 + Math.floor(1 + rnd() * (1 + 11 * bell(v, 32, 5)))]), [52.3, 3], [53, 2], [55, 1], [57.3, 1], [59.4, 1], [67.1, 1]],
  dpf: [...range(.08, 1.48, .01).map(v => [v, 1 + Math.floor(rnd() * rnd() * 5 * bell(v, .3, .45))]), ...[1.6, 1.69, 1.7, 1.73, 1.78, 1.89, 2.14, 2.28, 2.33, 2.42].map(v => [v, 1])],
  glu: [[0, 5], [44, 1], ...range(56, 199, 1).map(v => [v, 1 + Math.floor(5 + rnd() * 12) * bell(v, 114, 24) + rnd() * 2])],
  ins: [[0, 1], ...range(15, 340, 5).map(v => [v, 1 + Math.floor(rnd() * rnd() * 900 * bell(v, 130, 60) / v)]), ...[360, 370, 387, 402, 415, 440, 465, 474, 480, 485].map(v => [v, 1]), [490, 2], [495, 2], [510, 1], [540, 1], [545, 1], [579, 1], [600, 1], [680, 1], [744, 1], [846, 1]]
};

const STOPS = [[185,221,241],[158,203,231],[122,171,211],[90,139,184],[66,113,160],[42,87,131]];
function color(t) {
  t = Math.max(0, Math.min(1, t)) * 5;
  const i = Math.min(4, Math.floor(t)), f = t - i;
  return 'rgb(' + STOPS[i].map((c, n) => Math.round(c + (STOPS[i + 1][n] - c) * f)).join(',') + ')';
}

function records(a, b) {
  const d = D[a + '-' + b], out = [], q = (v, k) => Math.round(v / V[k].step) * V[k].step;
  const first = d.band[0][0], last = d.band[d.band.length - 1][0];
  for (let i = 0; i < 440; i++) {
    const x = first + (last - first) * rnd();
    let j = 0;
    while (j < d.band.length - 2 && x > d.band[j + 1][0]) j++;
    const p = d.band[j], n = d.band[j + 1], f = (x - p[0]) / (n[0] - p[0]);
    const lo = p[1] + (n[1] - p[1]) * f, hi = p[2] + (n[2] - p[2]) * f;
    out.push([q(x, a), q(lo + (hi - lo) * rnd(), b)]);
  }
  (d.y0 || []).forEach(x => out.push([x, 0]));
  (d.x0 || []).forEach(y => out.push([0, y]));
  return out.concat(d.pts);
}

const s = [];
const line = (x1, y1, x2, y2, c) => s.push(`<line class="${c}" x1="${x1}" y1="${y1}" x2="${x2}" y2="${y2}"/>`);
const px = n => Math.round(n - .5) + .5;
const label = (x, y, t, c, anchor, len, extra) => s.push(`<text x="${x}" y="${y}" class="${c}" text-anchor="${anchor}"${len ? ` textLength="${len}"` : ''} ${extra || ''}>${t}</text>`);

label(10, 65.5, 'Scatter charts between relevant variables to analyze the relationships', 'cap', 'start', 662);
s.push(`<defs><clipPath id="pc"><rect x="0" y="0" width="${W}" height="${H}"/></clipPath><clipPath id="rc"><rect x="0" y="${TOP + H * 3}" width="75" height="${H}"/></clipPath></defs>`);

K.forEach((k, i) => {
  const v = V[k];
  v.xt.forEach(t => {
    const x = px(LEFT + W * i + v.x[0] + v.x[1] * t);
    line(x, TOP, x, TOP + H * 6 + 4, 'grid');
    if (t === 0) line(x, TOP, x, TOP + H * 6, 'zero');
    label(x - .5, TOP + H * 6 + 19, t, '', 'middle');
  });
  v.yt.forEach(t => {
    const y = px(TOP + H * i + v.y[0] - v.y[1] * t);
    line(LEFT - 5, y, LEFT + W * 6, y, 'grid');
    if (t === 0) line(LEFT, y, LEFT + W * 6, y, 'zero');
    label(LEFT - 7.5, y + (k === 'dpf' && t === 0 ? 1 : 4.5), t, '', 'end');
  });
});

const marks = {};
K.forEach((a, i) => K.slice(i + 1).forEach(b => { marks[a + '-' + b] = records(a, b); }));
K.forEach((row, r) => K.forEach((col, c) => {
  const X = V[col], Y = V[row];
  let m;
  if (r === c) {
    m = COUNT[row].map(p => [p[0], p[0], p[0] * p[1] / Y.max]);
    if (row === 'bmi' || row === 'glu') m.sort(() => rnd() - .5);
  } else {
    m = (r > c ? marks[col + '-' + row] : marks[row + '-' + col].map(p => [p[1], p[0]]))
      .map(p => [p[0], p[1], p[1] * (rnd() < .02 && row !== 'dpf' && row !== 'ins' ? 2 : 1) / Y.max]);
    if (col === 'ins') {
      m = m.filter(p => p[0] > 4);
      COUNT[row].forEach(p => {
        if (row === 'age' && p[0] > 72) return;
        if (row === 'dpf' && p[0] > 1.9) return;
        m.push([0, p[0], p[0] * Math.max(1, p[1] * .52) / Y.max]);
      });
    }
  }
  s.push(`<g transform="translate(${LEFT + W * c},${TOP + H * r})" clip-path="url(#pc)" fill-opacity=".92">` +
    m.map(p => `<circle cx="${(X.x[0] + X.x[1] * p[0]).toFixed(1)}" cy="${(Y.y[0] - Y.y[1] * p[1]).toFixed(1)}" r="5" fill="${color(p[2])}"/>`).join('') + '</g>');
}));

for (let i = 0; i <= 6; i++) {
  line(9, TOP + H * i, LEFT + W * 6, TOP + H * i, 'frame');
  line(LEFT + W * i, TOP, LEFT + W * i, 760, 'frame');
}
const WID = { age: 28, bp: 85, bmi: 30, dpf: 155, glu: 50, ins: 45 };
K.forEach((k, i) => {
  label(LEFT + W * (i + .5) - .5, 749, V[k].t, 'ax', 'middle', WID[k]);
  const y = TOP + H * (i + .5);
  const turn = x => `transform="rotate(-90 ${x} ${y})"`;
  if (k === 'dpf') {
    s.push('<g clip-path="url(#rc)">');
    label(29, y, 'Diabetes Pedigree', 'ax', 'middle', 104, turn(29));
    label(45, y, 'Function', 'ax', 'middle', 50, `transform="rotate(-90 45 ${y})"`);
    s.push('</g>');
  } else label(29, y, V[k].t, 'ax', 'middle', WID[k], turn(29));
});
document.getElementById('chart').innerHTML = s.join('');
```
